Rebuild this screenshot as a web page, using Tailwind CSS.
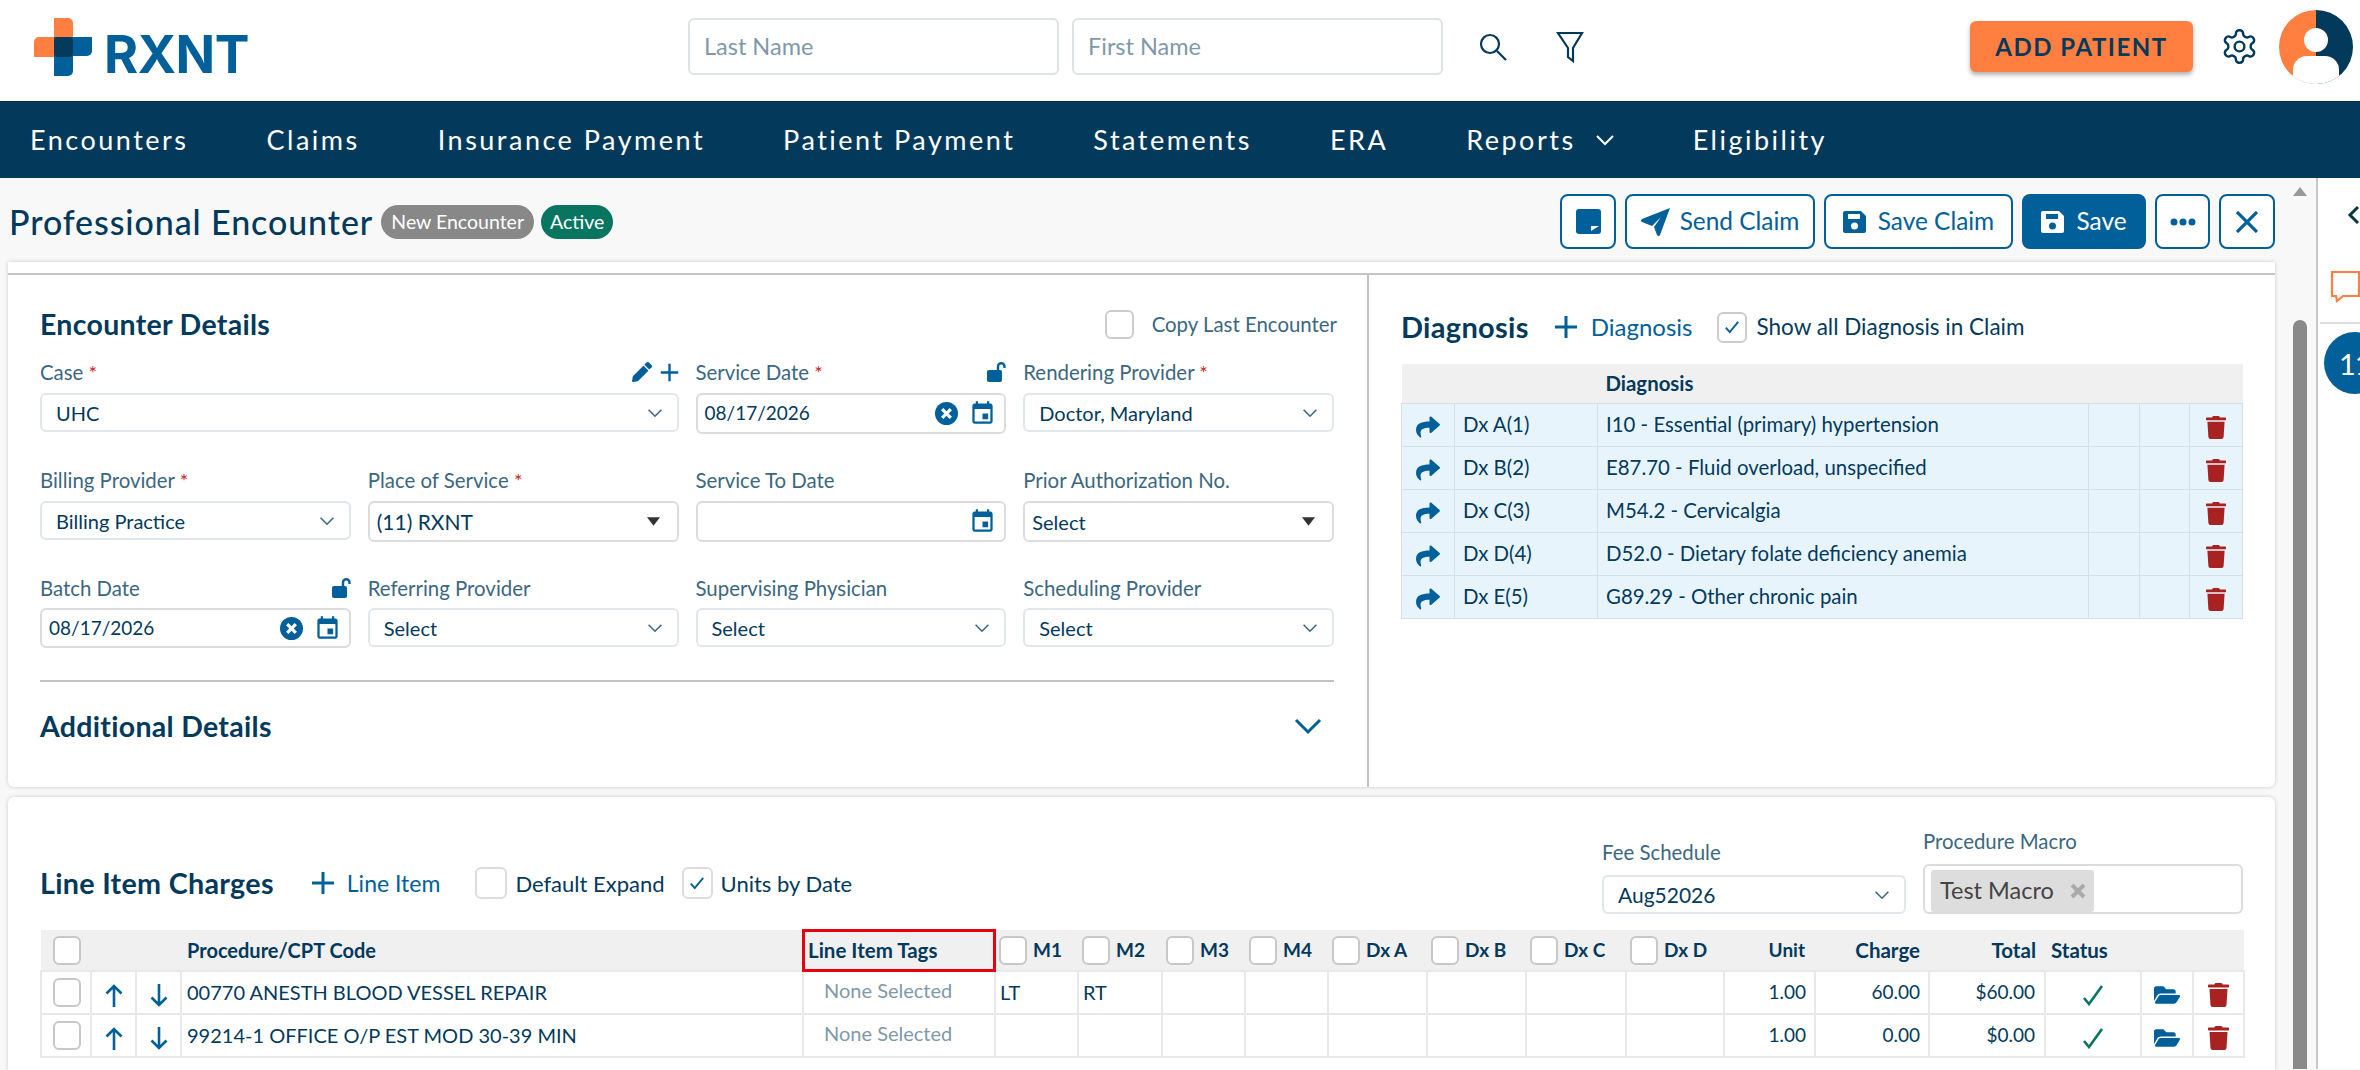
<!DOCTYPE html>
<html lang="en"><head><meta charset="utf-8"><title>RXNT Professional Encounter</title>
<script src="https://cdn.jsdelivr.net/npm/@tailwindcss/browser@4"></script></head>
<body class="w-[2360px] h-[1070px] overflow-hidden bg-[#f8f8f8] font-['Lato',sans-serif] text-[#033a5c] text-[20px]">
<svg class="hidden" width="0" height="0">
<symbol id="chev" viewBox="0 0 20 12"><path d="M2 2l8 8 8-8" fill="none" stroke="currentColor" stroke-width="2"/></symbol>
<symbol id="cal" viewBox="0 0 24 24"><path fill="currentColor" d="M17 12h-5v5h5v-5zM16 1v2H8V1H6v2H5c-1.110 0-1.990.9-1.990 2L3 19c0 1.100.89 2 2 2h14c1.100 0 2-.9 2-2V5c0-1.100-.9-2-2-2h-1V1h-2zm3 18H5V8h14v11z"/></symbol>
<symbol id="clr" viewBox="0 0 24 24"><circle cx="12" cy="12" r="12" fill="currentColor"/><path d="M7.500 7.500l9 9m0-9l-9 9" stroke="#fff" stroke-width="3.400" fill="none"/></symbol>
<symbol id="lock" viewBox="0 0 19 20"><path fill="currentColor" d="M0 10a2 2 0 0 1 2-2h11a2 2 0 0 1 2 2v8a2 2 0 0 1-2 2H2a2 2 0 0 1-2-2z"/><path d="M11 8V4.500a3 3 0 0 1 6.500 0V6" fill="none" stroke="currentColor" stroke-width="2.400"/></symbol>
<symbol id="pencil" viewBox="0 0 512 512"><path fill="currentColor" d="M497.900 142.100l-46.100 46.100c-4.700 4.700-12.300 4.700-17 0l-111-111c-4.700-4.700-4.700-12.300 0-17l46.100-46.100c18.700-18.700 49.100-18.700 67.900 0l60.100 60.100c18.800 18.700 18.800 49.100 0 67.900zM284.200 99.800L21.600 362.400.4 483.900c-2.900 16.400 11.400 30.600 27.800 27.800l121.500-21.300 262.600-262.600c4.700-4.700 4.700-12.300 0-17l-111-111c-4.800-4.700-12.400-4.700-17.100 0z"/></symbol>
<symbol id="plus" viewBox="0 0 24 24"><path d="M12 1v22M1 12h22" stroke="currentColor" stroke-width="3" fill="none"/></symbol>
<symbol id="trash" viewBox="0 0 448 512"><path fill="currentColor" d="M432 32H312l-9.400-18.700A24 24 0 0 0 281.100 0H166.800a23.720 23.720 0 0 0-21.400 13.300L136 32H16A16 16 0 0 0 0 48v32a16 16 0 0 0 16 16h416a16 16 0 0 0 16-16V48a16 16 0 0 0-16-16zM53.200 467a48 48 0 0 0 47.900 45h245.800a48 48 0 0 0 47.900-45L416 128H32z"/></symbol>
<symbol id="folder" viewBox="0 0 576 512"><path fill="currentColor" d="M572.694 292.093L500.270 416.248A63.997 63.997 0 0 1 444.989 448H45.025c-18.523 0-30.064-20.093-20.731-36.093l72.424-124.155A64 64 0 0 1 152 256h399.964c18.523 0 30.064 20.093 20.730 36.093zM152 224h328v-48c0-26.510-21.490-48-48-48H272l-64-64H48C21.490 64 0 85.490 0 112v278.046l69.077-118.418C86.214 242.250 117.989 224 152 224z"/></symbol>
<symbol id="share" viewBox="0 0 512 512"><path fill="currentColor" d="M503.691 189.836L327.687 37.851C312.281 24.546 288 35.347 288 56.015v80.053C127.371 137.907 0 170.100 0 322.326c0 61.441 39.581 122.309 83.333 154.132 13.653 9.931 33.111-2.533 28.077-18.631C66.066 312.814 132.917 274.316 288 272.085V360c0 20.700 24.300 31.453 39.687 18.164l176.004-152c11.071-9.562 11.086-26.753 0-36.328z"/></symbol>
<symbol id="save" viewBox="0 0 23 22"><path fill="currentColor" fill-rule="evenodd" d="M2 0h16l5 5v15a2 2 0 0 1-2 2H2a2 2 0 0 1-2-2V2a2 2 0 0 1 2-2zM5 3v5h12V3zM11.500 11.500a3.500 3.500 0 1 0 0 7 3.500 3.500 0 0 0 0-7z"/></symbol>
<symbol id="up" viewBox="0 0 18 23"><path d="M9 23V2M1.500 9.500L9 2l7.500 7.500" fill="none" stroke="currentColor" stroke-width="2.600"/></symbol>
<symbol id="down" viewBox="0 0 18 23"><path d="M9 0v21M1.500 13.500L9 21l7.500-7.500" fill="none" stroke="currentColor" stroke-width="2.600"/></symbol>
<symbol id="tick" viewBox="0 0 16 16"><path d="M2.500 8.500l3.500 4 7.500-9" fill="none" stroke="currentColor" stroke-width="1.700"/></symbol>
<symbol id="ok" viewBox="0 0 22 22"><path d="M2 14l5 6L20 2" fill="none" stroke="currentColor" stroke-width="2.600"/></symbol>
<symbol id="caret" viewBox="0 0 14 9"><path d="M0 0h14L7 9z" fill="currentColor"/></symbol>
</svg>

<header class="h-[101px] bg-white flex items-center pb-[8px]">
  <div class="w-[688px] pl-[34px] flex items-center mt-[8px]">
    <svg width="58" height="58" viewBox="0 0 58 58" class="mt-[-8px]">
      <path fill="#ff7f41" d="M20 0h14a5 5 0 0 1 5 5v34H0V24a5 5 0 0 1 5-5h15z"/>
      <path fill="#01609a" d="M20 19h38v14a5 5 0 0 1-5 5H39v15a5 5 0 0 1-5 5H20z"/>
      <rect x="20" y="19" width="19" height="20" rx="4" fill="#053a5c"/>
    </svg>
    <span class="ml-[12px] font-['Inter',sans-serif] font-bold text-[52px] leading-none text-[#01609a] tracking-[-0.5px] mt-[8px]">RXNT</span>
  </div>
  <div class="flex items-center gap-[13px]">
    <div class="w-[371px] h-[57px] border-2 border-[#dfe3e6] rounded-[6px] px-[14px] flex items-center text-[23.500px] text-[#7f99aa]">Last Name</div>
    <div class="w-[371px] h-[57px] border-2 border-[#dfe3e6] rounded-[6px] px-[14px] flex items-center text-[23.500px] text-[#7f99aa]">First Name</div>
  </div>
  <svg class="ml-[35px]" width="30" height="30" viewBox="0 0 30 30" fill="none" stroke="#033a5c" stroke-width="2.200"><circle cx="12" cy="12" r="9"/><path d="M19 19l9 9"/></svg>
  <svg class="ml-[48px]" width="28" height="32" viewBox="0 0 28 32" fill="none" stroke="#033a5c" stroke-width="2.200"><path d="M2 2h24L17 17v13l-5-4V17z"/></svg>
  <button class="ml-[386px] w-[223px] h-[51px] rounded-[6px] bg-[#ff7f41] shadow-[0_3px_4px_rgba(0,0,0,.3)] text-[24px] font-bold tracking-[1.500px]">ADD PATIENT</button>
  <svg class="ml-[27px]" width="39" height="39" viewBox="0 0 24 24" fill="none" stroke="#033a5c" stroke-width="1.500"><path d="M12.220 2h-.44a2 2 0 0 0-2 2v.18a2 2 0 0 1-1 1.730l-.43.25a2 2 0 0 1-2 0l-.15-.08a2 2 0 0 0-2.730.73l-.22.38a2 2 0 0 0 .73 2.730l.15.1a2 2 0 0 1 1 1.720v.51a2 2 0 0 1-1 1.740l-.15.09a2 2 0 0 0-.73 2.730l.22.38a2 2 0 0 0 2.730.73l.15-.08a2 2 0 0 1 2 0l.43.25a2 2 0 0 1 1 1.730V20a2 2 0 0 0 2 2h.44a2 2 0 0 0 2-2v-.18a2 2 0 0 1 1-1.730l.43-.25a2 2 0 0 1 2 0l.15.08a2 2 0 0 0 2.730-.73l.22-.39a2 2 0 0 0-.73-2.730l-.15-.08a2 2 0 0 1-1-1.740v-.5a2 2 0 0 1 1-1.740l.15-.09a2 2 0 0 0 .73-2.730l-.22-.38a2 2 0 0 0-2.730-.73l-.15.08a2 2 0 0 1-2 0l-.43-.25a2 2 0 0 1-1-1.730V4a2 2 0 0 0-2-2z"/><circle cx="12" cy="12" r="3"/></svg>
  <svg class="ml-[20px]" width="74" height="74" viewBox="0 0 74 74"><defs><clipPath id="av"><circle cx="37" cy="37" r="37"/></clipPath></defs><g clip-path="url(#av)"><rect width="37" height="74" fill="#ff7f41"/><rect x="37" width="37" height="74" fill="#033a5c"/><circle cx="37" cy="30" r="12" fill="#fff"/><path d="M14 74V60a14 14 0 0 1 14-14h18a14 14 0 0 1 14 14v14z" fill="#fff"/></g></svg>
</header>

<nav class="h-[77px] bg-[#033a5c] border-t border-[#02304c] flex items-center pl-[30px] gap-[78px] text-[27px] tracking-[2.500px] text-white">
  <span>Encounters</span><span>Claims</span><span>Insurance Payment</span><span>Patient Payment</span><span>Statements</span><span>ERA</span>
  <span class="flex items-center">Reports<svg class="ml-[19px] w-[20px] h-[12px]"><use href="#chev"/></svg></span>
  <span>Eligibility</span>
</nav>

<div class="flex h-[891px]">
  <main class="w-[2283px] shrink-0 pl-[8px]">
    <div class="h-[84px] flex items-center justify-between pt-[3px] pr-[8px]">
      <div class="flex items-center">
        <h1 class="ml-[1px] text-[34px] font-medium tracking-[0.9px]">Professional Encounter</h1>
        <span class="ml-[8px] h-[34px] w-[153px] rounded-full bg-[#888] text-white text-[19.500px] flex items-center justify-center">New Encounter</span>
        <span class="ml-[7px] h-[34px] w-[72px] rounded-full bg-[#07755f] text-white text-[19.500px] flex items-center justify-center">Active</span>
      </div>
      <div class="flex items-center gap-[9px] text-[24.400px] text-[#01609a]">
        <button class="w-[56px] h-[55px] border-2 border-[#01609a] rounded-[8px] bg-white flex items-center justify-center"><svg width="25" height="25" viewBox="0 0 25 25"><rect width="25" height="25" rx="3" fill="#01609a"/><path fill="#fff" d="M15 22v-5h8z"/></svg></button>
        <button class="w-[190px] h-[55px] border-2 border-[#01609a] rounded-[8px] bg-white flex items-center justify-center gap-[9px]"><svg width="30" height="28" viewBox="0 0 30 28"><path fill="#01609a" d="M29 0L1 11q-2 2 0 3l10 4 9-9-7 10 3 8q2 2 3 0z"/></svg>Send Claim</button>
        <button class="w-[189px] h-[55px] border-2 border-[#01609a] rounded-[8px] bg-white flex items-center justify-center gap-[12px]"><svg width="23" height="22"><use href="#save"/></svg>Save Claim</button>
        <button class="w-[124px] h-[55px] rounded-[8px] bg-[#01609a] text-white flex items-center justify-center gap-[12px]"><svg width="23" height="22"><use href="#save"/></svg>Save</button>
        <button class="w-[55px] h-[55px] border-2 border-[#01609a] rounded-[8px] bg-white flex items-center justify-center"><svg width="26" height="8" viewBox="0 0 26 8" fill="#01609a"><circle cx="4" cy="4" r="3.500"/><circle cx="13" cy="4" r="3.500"/><circle cx="22" cy="4" r="3.500"/></svg></button>
        <button class="w-[56px] h-[55px] border-2 border-[#01609a] rounded-[8px] bg-white flex items-center justify-center"><svg width="22" height="22" viewBox="0 0 22 22" stroke="#01609a" stroke-width="3.200"><path d="M1 1l20 20M21 1L1 21"/></svg></button>
      </div>
    </div>

    <section class="w-[2267px] h-[525px] bg-white shadow-[0_0_4px_rgba(0,0,0,.18)] rounded-b-[6px] pt-[11px]">
      <div class="h-[514px] border-t-2 border-[#c4c4c4] flex">
        <div class="w-[1361px] border-r-2 border-[#c4c4c4] pl-[32px] pr-[33px]">
          <div class="h-[75px] flex items-center justify-between pt-[24px]">
            <h2 class="text-[28.500px] font-bold tracking-[0.3px]">Encounter Details</h2>
            <label class="mr-[-3px] flex items-center text-[20.400px] text-[#3c6781]"><span class="w-[29px] h-[29px] border-2 border-[#ccc] rounded-[6px] mr-[18px]"></span>Copy Last Encounter</label>
          </div>
          <div class="grid grid-cols-4 gap-x-[17px] auto-rows-[108px]">
            <div class="col-span-2">
              <div class="h-[30px] mt-[7px] flex items-center justify-between text-[20.400px] text-[#3c6781]"><span>Case <b class="text-[#c22] font-normal text-[20px]">*</b></span><span class="flex items-center gap-[8px] text-[#01609a]"><svg width="20" height="20"><use href="#pencil"/></svg><svg width="19" height="19"><use href="#plus"/></svg></span></div>
              <div class="mt-[6px] h-[39px] border-2 border-[#e0e7ec] rounded-[6px] pl-[14px] pr-[14px] flex items-center justify-between">UHC<svg class="w-[16px] h-[10px] text-[#3c6781]"><use href="#chev"/></svg></div>
            </div>
            <div>
              <div class="h-[30px] mt-[7px] flex items-center justify-between text-[20.400px] text-[#3c6781]"><span>Service Date <b class="text-[#c22] font-normal text-[20px]">*</b></span><svg class="text-[#01609a]" width="19" height="20"><use href="#lock"/></svg></div>
              <div class="mt-[6px] h-[41px] border-2 border-[#dcdcdc] rounded-[6px] pl-[7px] pr-[8px] flex items-center text-[19px]">08/17/2026<svg class="ml-auto text-[#01609a]" width="23" height="23"><use href="#clr"/></svg><svg class="ml-[11px] text-[#01609a]" width="27" height="27"><use href="#cal"/></svg></div>
            </div>
            <div>
              <div class="h-[30px] mt-[7px] flex items-center text-[20.400px] text-[#3c6781]"><span>Rendering Provider <b class="text-[#c22] font-normal text-[20px]">*</b></span></div>
              <div class="mt-[6px] h-[39px] border-2 border-[#e0e7ec] rounded-[6px] pl-[14px] pr-[14px] flex items-center justify-between">Doctor, Maryland<svg class="w-[16px] h-[10px] text-[#3c6781]"><use href="#chev"/></svg></div>
            </div>

            <div>
              <div class="h-[30px] mt-[7px] flex items-center text-[20.400px] text-[#3c6781]"><span>Billing Provider <b class="text-[#c22] font-normal text-[20px]">*</b></span></div>
              <div class="mt-[6px] h-[39px] border-2 border-[#e0e7ec] rounded-[6px] pl-[14px] pr-[14px] flex items-center justify-between">Billing Practice<svg class="w-[16px] h-[10px] text-[#3c6781]"><use href="#chev"/></svg></div>
            </div>
            <div>
              <div class="h-[30px] mt-[7px] flex items-center text-[20.400px] text-[#3c6781]"><span>Place of Service <b class="text-[#c22] font-normal text-[20px]">*</b></span></div>
              <div class="mt-[6px] h-[41px] border-2 border-[#dcdcdc] rounded-[6px] pl-[7px] pr-[17px] flex items-center justify-between text-[21px]">(11) RXNT<svg class="w-[13px] h-[9px] text-[#333]"><use href="#caret"/></svg></div>
            </div>
            <div>
              <div class="h-[30px] mt-[7px] flex items-center text-[20.400px] text-[#3c6781]">Service To Date</div>
              <div class="mt-[6px] h-[41px] border-2 border-[#dcdcdc] rounded-[6px] pr-[8px] flex items-center justify-end"><svg class="text-[#01609a]" width="27" height="27"><use href="#cal"/></svg></div>
            </div>
            <div>
              <div class="h-[30px] mt-[7px] flex items-center text-[20.400px] text-[#3c6781]">Prior Authorization No.</div>
              <div class="mt-[6px] h-[41px] border-2 border-[#dcdcdc] rounded-[6px] pl-[7px] pr-[17px] flex items-center justify-between">Select<svg class="w-[13px] h-[9px] text-[#333]"><use href="#caret"/></svg></div>
            </div>

            <div>
              <div class="h-[30px] mt-[7px] flex items-center justify-between text-[20.400px] text-[#3c6781]"><span>Batch Date</span><svg class="text-[#01609a]" width="19" height="20"><use href="#lock"/></svg></div>
              <div class="mt-[5px] h-[40px] border-2 border-[#dcdcdc] rounded-[6px] pl-[7px] pr-[8px] flex items-center text-[19px]">08/17/2026<svg class="ml-auto text-[#01609a]" width="23" height="23"><use href="#clr"/></svg><svg class="ml-[11px] text-[#01609a]" width="27" height="27"><use href="#cal"/></svg></div>
            </div>
            <div>
              <div class="h-[30px] mt-[7px] flex items-center text-[20.400px] text-[#3c6781]">Referring Provider</div>
              <div class="mt-[5px] h-[39px] border-2 border-[#e0e7ec] rounded-[6px] pl-[14px] pr-[14px] flex items-center justify-between">Select<svg class="w-[16px] h-[10px] text-[#3c6781]"><use href="#chev"/></svg></div>
            </div>
            <div>
              <div class="h-[30px] mt-[7px] flex items-center text-[20.400px] text-[#3c6781]">Supervising Physician</div>
              <div class="mt-[5px] h-[39px] border-2 border-[#e0e7ec] rounded-[6px] pl-[14px] pr-[14px] flex items-center justify-between">Select<svg class="w-[16px] h-[10px] text-[#3c6781]"><use href="#chev"/></svg></div>
            </div>
            <div>
              <div class="h-[30px] mt-[7px] flex items-center text-[20.400px] text-[#3c6781]">Scheduling Provider</div>
              <div class="mt-[5px] h-[39px] border-2 border-[#e0e7ec] rounded-[6px] pl-[14px] pr-[14px] flex items-center justify-between">Select<svg class="w-[16px] h-[10px] text-[#3c6781]"><use href="#chev"/></svg></div>
            </div>
          </div>
          <div class="mt-[6px] h-[60px] border-t-2 border-[#c4c4c4] pt-[30px] flex items-center justify-between pr-[11px]">
            <h2 class="text-[28.500px] font-bold tracking-[0.3px]">Additional Details</h2>
            <svg class="w-[30px] h-[18px] text-[#01609a]"><use href="#chev"/></svg>
          </div>
        </div>
        <div class="flex-1 pl-[32px] pr-[32px]">
          <div class="h-[89px] flex items-center pt-[15px]">
            <h2 class="text-[29px] font-bold tracking-[0.3px]">Diagnosis</h2>
            <svg class="ml-[25px] text-[#01609a]" width="24" height="24"><use href="#plus"/></svg>
            <span class="ml-[13px] text-[#01609a] text-[24px]">Diagnosis</span>
            <span class="ml-[24px] w-[30px] h-[31px] border-2 border-[#ccc] rounded-[6px] flex items-center justify-center text-[#01609a]"><svg width="18" height="18"><use href="#tick"/></svg></span>
            <span class="ml-[10px] text-[22.500px]">Show all Diagnosis in Claim</span>
          </div>
          <table class="table-fixed border-collapse w-[841px] text-[20.400px]">
            <colgroup><col class="w-[53px]"><col class="w-[143px]"><col class="w-[491px]"><col class="w-[51px]"><col class="w-[50px]"><col class="w-[53px]"></colgroup>
            <thead><tr class="h-[39px] bg-[#f0f0f0]"><th colspan="2"></th><th class="text-left pl-[8px] font-bold">Diagnosis</th><th colspan="3"></th></tr></thead>
            <tbody class="bg-[#e7f4fc]">
              <tr class="h-[43px]"><td class="border border-[#d6dfe5] text-center"><svg class="inline text-[#01609a]" width="24" height="24"><use href="#share"/></svg></td><td class="border border-[#d6dfe5] pl-[8px]">Dx A(1)</td><td class="border border-[#d6dfe5] pl-[8px]">I10 - Essential (primary) hypertension</td><td class="border border-[#d6dfe5]"></td><td class="border border-[#d6dfe5]"></td><td class="border border-[#d6dfe5] text-center"><svg class="inline text-[#a82222]" width="20" height="23"><use href="#trash"/></svg></td></tr>
              <tr class="h-[43px]"><td class="border border-[#d6dfe5] text-center"><svg class="inline text-[#01609a]" width="24" height="24"><use href="#share"/></svg></td><td class="border border-[#d6dfe5] pl-[8px]">Dx B(2)</td><td class="border border-[#d6dfe5] pl-[8px]">E87.70 - Fluid overload, unspecified</td><td class="border border-[#d6dfe5]"></td><td class="border border-[#d6dfe5]"></td><td class="border border-[#d6dfe5] text-center"><svg class="inline text-[#a82222]" width="20" height="23"><use href="#trash"/></svg></td></tr>
              <tr class="h-[43px]"><td class="border border-[#d6dfe5] text-center"><svg class="inline text-[#01609a]" width="24" height="24"><use href="#share"/></svg></td><td class="border border-[#d6dfe5] pl-[8px]">Dx C(3)</td><td class="border border-[#d6dfe5] pl-[8px]">M54.2 - Cervicalgia</td><td class="border border-[#d6dfe5]"></td><td class="border border-[#d6dfe5]"></td><td class="border border-[#d6dfe5] text-center"><svg class="inline text-[#a82222]" width="20" height="23"><use href="#trash"/></svg></td></tr>
              <tr class="h-[43px]"><td class="border border-[#d6dfe5] text-center"><svg class="inline text-[#01609a]" width="24" height="24"><use href="#share"/></svg></td><td class="border border-[#d6dfe5] pl-[8px]">Dx D(4)</td><td class="border border-[#d6dfe5] pl-[8px]">D52.0 - Dietary folate deficiency anemia</td><td class="border border-[#d6dfe5]"></td><td class="border border-[#d6dfe5]"></td><td class="border border-[#d6dfe5] text-center"><svg class="inline text-[#a82222]" width="20" height="23"><use href="#trash"/></svg></td></tr>
              <tr class="h-[43px]"><td class="border border-[#d6dfe5] text-center"><svg class="inline text-[#01609a]" width="24" height="24"><use href="#share"/></svg></td><td class="border border-[#d6dfe5] pl-[8px]">Dx E(5)</td><td class="border border-[#d6dfe5] pl-[8px]">G89.29 - Other chronic pain</td><td class="border border-[#d6dfe5]"></td><td class="border border-[#d6dfe5]"></td><td class="border border-[#d6dfe5] text-center"><svg class="inline text-[#a82222]" width="20" height="23"><use href="#trash"/></svg></td></tr>
            </tbody>
          </table>
        </div>
      </div>
    </section>

    <section class="mt-[10px] w-[2267px] h-[273px] bg-white shadow-[0_0_4px_rgba(0,0,0,.18)] rounded-t-[6px] px-[32px]">
      <div class="h-[133px] flex items-end pb-[25px]">
        <div class="flex items-center">
          <h2 class="text-[28.700px] font-bold tracking-[0.3px]">Line Item Charges</h2>
          <svg class="ml-[37px] text-[#01609a]" width="24" height="24"><use href="#plus"/></svg>
          <span class="ml-[12px] text-[#01609a] text-[23px]">Line Item</span>
          <span class="ml-[35px] w-[32px] h-[32px] border-2 border-[#ddd] rounded-[6px]"></span>
          <span class="ml-[8px] text-[22px]">Default Expand</span>
          <span class="ml-[17px] w-[31px] h-[32px] border-2 border-[#ddd] rounded-[6px] flex items-center justify-center text-[#01609a]"><svg width="18" height="18"><use href="#tick"/></svg></span>
          <span class="ml-[8px] text-[22px]">Units by Date</span>
        </div>
        <div class="ml-auto flex items-end gap-[17px] mb-[-9px]">
          <div class="w-[304px]"><div class="text-[20.400px] text-[#3c6781] mb-[7px]">Fee Schedule</div><div class="h-[39px] border-2 border-[#e0e7ec] rounded-[6px] pl-[14px] pr-[14px] flex items-center justify-between text-[21px]">Aug52026<svg class="w-[16px] h-[10px] text-[#3c6781]"><use href="#chev"/></svg></div></div>
          <div class="w-[320px]"><div class="text-[20.400px] text-[#3c6781] mb-[7px]">Procedure Macro</div><div class="h-[50px] border-2 border-[#dcdcdc] rounded-[6px] pl-[6px] flex items-end"><span class="w-[163px] h-[42px] bg-[#ddd] rounded-[3px] pl-[9px] pr-[8px] flex items-center justify-between text-[23.500px] text-[#444]">Test Macro<svg width="16" height="16" viewBox="0 0 16 16" stroke="#aaa" stroke-width="4"><path d="M2 2l12 12M14 2L2 14"/></svg></span></div></div>
        </div>
      </div>
      <table class="table-fixed border-collapse w-[2203px] text-[20px]">
        <colgroup><col class="w-[50px]"><col class="w-[45px]"><col class="w-[45px]"><col class="w-[622px]"><col class="w-[192px]"><col class="w-[83px]"><col class="w-[84px]"><col class="w-[83px]"><col class="w-[83px]"><col class="w-[99px]"><col class="w-[99px]"><col class="w-[100px]"><col class="w-[98px]"><col class="w-[91px]"><col class="w-[114px]"><col class="w-[116px]"><col class="w-[96px]"><col class="w-[52px]"><col class="w-[51px]"></colgroup>
        <thead><tr class="h-[41px] bg-[#f0f0f0] font-bold text-[19px]">
          <th class="pl-[12px] text-left"><span class="block w-[28px] h-[29px] border-2 border-[#c8c8c8] bg-white rounded-[6px]"></span></th><th></th><th></th>
          <th class="text-left pl-[6px] text-[20px]">Procedure/CPT Code</th>
          <th class="text-left pl-[5px] text-[20.500px] outline-[3px] outline-[#e8000f] -outline-offset-[2px]">Line Item Tags</th>
          <th class="text-left pl-[4px]"><span class="flex items-center gap-[6px]"><span class="w-[28px] h-[29px] border-2 border-[#c8c8c8] bg-white rounded-[6px]"></span>M1</span></th>
          <th class="text-left pl-[4px]"><span class="flex items-center gap-[6px]"><span class="w-[28px] h-[29px] border-2 border-[#c8c8c8] bg-white rounded-[6px]"></span>M2</span></th>
          <th class="text-left pl-[4px]"><span class="flex items-center gap-[6px]"><span class="w-[28px] h-[29px] border-2 border-[#c8c8c8] bg-white rounded-[6px]"></span>M3</span></th>
          <th class="text-left pl-[4px]"><span class="flex items-center gap-[6px]"><span class="w-[28px] h-[29px] border-2 border-[#c8c8c8] bg-white rounded-[6px]"></span>M4</span></th>
          <th class="text-left pl-[4px]"><span class="flex items-center gap-[6px]"><span class="w-[28px] h-[29px] border-2 border-[#c8c8c8] bg-white rounded-[6px]"></span>Dx A</span></th>
          <th class="text-left pl-[4px]"><span class="flex items-center gap-[6px]"><span class="w-[28px] h-[29px] border-2 border-[#c8c8c8] bg-white rounded-[6px]"></span>Dx B</span></th>
          <th class="text-left pl-[4px]"><span class="flex items-center gap-[6px]"><span class="w-[28px] h-[29px] border-2 border-[#c8c8c8] bg-white rounded-[6px]"></span>Dx C</span></th>
          <th class="text-left pl-[4px]"><span class="flex items-center gap-[6px]"><span class="w-[28px] h-[29px] border-2 border-[#c8c8c8] bg-white rounded-[6px]"></span>Dx D</span></th>
          <th class="text-right pr-[10px]">Unit</th><th class="text-right pr-[9px] text-[20.500px]">Charge</th><th class="text-right pr-[9px] text-[20.500px]">Total</th><th class="text-left pl-[6px] text-[20.500px]">Status</th><th></th><th></th>
        </tr></thead>
        <tbody>
          <tr class="h-[43px] [&>td]:border-2 [&>td]:border-[#e8e8e8]">
            <td class="pl-[11px]"><span class="block w-[28px] h-[29px] border-2 border-[#c8c8c8] rounded-[6px]"></span></td>
            <td class="text-center"><svg class="inline text-[#01609a]" width="18" height="23"><use href="#up"/></svg></td><td class="text-center"><svg class="inline text-[#01609a]" width="18" height="23"><use href="#down"/></svg></td>
            <td class="pl-[5px] pb-[2px]">00770 ANESTH BLOOD VESSEL REPAIR</td><td class="pl-[20px] text-[#7f99aa] pb-[5px]">None Selected</td><td class="pl-[4px] pb-[2px]">LT</td><td class="pl-[4px] pb-[2px]">RT</td><td></td><td></td><td></td><td></td><td></td><td></td>
            <td class="text-right pr-[8px] text-[19px]">1.00</td><td class="text-right pr-[8px] text-[19px]">60.00</td><td class="text-right pr-[9px] text-[19px]">$60.00</td>
            <td class="text-center text-[#07755f]"><svg class="inline" width="22" height="22"><use href="#ok"/></svg></td><td class="text-center"><svg class="inline text-[#01609a]" width="26" height="26"><use href="#folder"/></svg></td><td class="text-center"><svg class="inline text-[#a82222]" width="21" height="24"><use href="#trash"/></svg></td>
          </tr>
          <tr class="h-[43px] [&>td]:border-2 [&>td]:border-[#e8e8e8]">
            <td class="pl-[11px]"><span class="block w-[28px] h-[29px] border-2 border-[#c8c8c8] rounded-[6px]"></span></td>
            <td class="text-center"><svg class="inline text-[#01609a]" width="18" height="23"><use href="#up"/></svg></td><td class="text-center"><svg class="inline text-[#01609a]" width="18" height="23"><use href="#down"/></svg></td>
            <td class="pl-[5px] pb-[2px]">99214-1 OFFICE O/P EST MOD 30-39 MIN</td><td class="pl-[20px] text-[#7f99aa] pb-[5px]">None Selected</td><td></td><td></td><td></td><td></td><td></td><td></td><td></td><td></td>
            <td class="text-right pr-[8px] text-[19px]">1.00</td><td class="text-right pr-[8px] text-[19px]">0.00</td><td class="text-right pr-[9px] text-[19px]">$0.00</td>
            <td class="text-center text-[#07755f]"><svg class="inline" width="22" height="22"><use href="#ok"/></svg></td><td class="text-center"><svg class="inline text-[#01609a]" width="26" height="26"><use href="#folder"/></svg></td><td class="text-center"><svg class="inline text-[#a82222]" width="21" height="24"><use href="#trash"/></svg></td>
          </tr>
        </tbody>
      </table>
    </section>
  </main>

  <div class="w-[35px] shrink-0 flex flex-col items-center pt-[9px] pl-[6px] pr-[6px] border-r-2 border-[#c8c8c8]">
    <svg width="14" height="9" viewBox="0 0 14 9"><path d="M7 0l7 9H0z" fill="#999"/></svg>
    <div class="mt-[124px] w-[14px] flex-1 bg-[#8a8a8a] rounded-t-full"></div>
  </div>

  <aside class="flex-1 bg-white overflow-hidden flex flex-col">
    <div class="h-[146px] border-b-2 border-[#ddd] ml-[2px] relative">
      <svg class="absolute left-[27px] top-[27px]" width="13" height="20" viewBox="0 0 13 20" fill="none" stroke="#053a3c" stroke-width="3"><path d="M11 2L3 10l8 8"/></svg>
      <svg class="absolute left-[9px] top-[92px]" width="40" height="36" viewBox="0 0 40 36" fill="none" stroke="#ff7f41" stroke-width="2.200"><path d="M3 2h27v24H14l-6 5-1-5H3zM22 26h10l7 6"/></svg>
    </div>
    <div class="mt-[8px] ml-[6px] w-[62px] h-[62px] rounded-full bg-[#01609a] text-white text-[29px] flex items-center pl-[15px] shrink-0 leading-none tracking-[-1px]">11</div>
  </aside>
</div>
</body></html>
